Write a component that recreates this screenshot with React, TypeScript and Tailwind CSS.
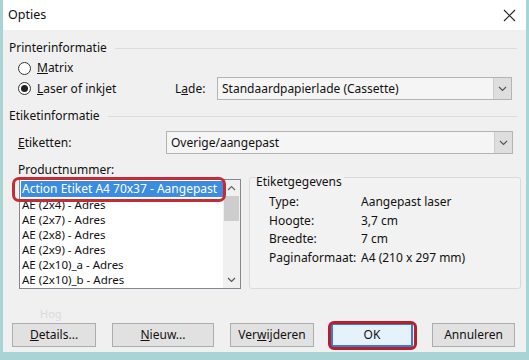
import { FC } from 'react';

const font = { fontFamily: '"Noto Sans", "Open Sans", sans-serif' };

const items = [
    'AE (2x4) - Adres',
    'AE (2x7) - Adres',
    'AE (2x8) - Adres',
    'AE (2x9) - Adres',
    'AE (2x10)_a - Adres',
    'AE (2x10)_b - Adres',
];

const Chevron: FC = () => (
    <svg width="9" height="6" viewBox="0 0 9 6" fill="none">
        <path d="M1 1l3.5 3.5L8 1" stroke="#555" strokeWidth="1.2" />
    </svg>
);

const Select: FC<{ value: string; className: string }> = ({ value, className }) => (
    <div className={`flex h-[23px] border border-[#b4b4b4] bg-[#f5f5f5] ${className}`}>
        <div className="flex-1 pl-[4px] leading-[21px] text-[12px] text-[#111]">{value}</div>
        <div className="flex w-[18px] items-center justify-center border-l border-[#cdcdcd] bg-[#dedede]">
            <Chevron />
        </div>
    </div>
);

const GroupHeader: FC<{ title: string }> = ({ title }) => (
    <div className="flex h-[16px] items-center gap-[8px] pl-[6px] pr-[9px]">
        <span className="text-[12px] text-[#111]">{title}</span>
        <div className="h-px flex-1 bg-[#dcdcdc]" />
    </div>
);

const Radio: FC<{ checked?: boolean }> = ({ checked }) => (
    <div className="flex h-[13px] w-[13px] items-center justify-center rounded-full border border-[#333] bg-white">
        {checked && <div className="h-[7px] w-[7px] rounded-full bg-[#222]" />}
    </div>
);

const Btn: FC<{ label: React.ReactNode; className: string; primary?: boolean }> = ({ label, className, primary }) => (
    <div
        className={`flex h-[24px] items-center justify-center text-[12px] text-[#111] ${primary ? 'border-2 border-[#3a7bd5] bg-[#e5f1fb]' : 'border border-[#adadad] bg-[#e1e1e1]'} ${className}`}
    >
        {label}
    </div>
);

export default function App() {
    return (
        <div className="relative h-[360px] w-[529px] overflow-hidden bg-[#a9d4d6]" style={font}>
            <div className="ml-[3px] mr-[3px] flex h-[352px] flex-col bg-[#f0f0f0]">
                {/* title bar */}
                <div className="flex h-[30px] items-center justify-between bg-white pl-[5px] pr-[10px]">
                    <span className="text-[12.5px] text-[#111]">Opties</span>
                    <svg width="13" height="13" viewBox="0 0 13 13">
                        <path d="M1 1l11 11M12 1L1 12" stroke="#222" strokeWidth="1.1" />
                    </svg>
                </div>

                <div className="mt-[10px]">
                    <GroupHeader title="Printerinformatie" />
                </div>

                <div className="mt-[4px] flex h-[16px] items-center gap-[6px] pl-[15px]">
                    <Radio />
                    <span className="text-[12px] text-[#111]">
                        <u>M</u>atrix
                    </span>
                </div>

                <div className="mt-[1px] flex h-[23px] items-center pl-[15px]">
                    <Radio checked />
                    <span className="ml-[6px] w-[138px] text-[12px] text-[#111]">
                        <u>L</u>aser of inkjet
                    </span>
                    <span className="w-[42px] text-[12px] text-[#111]">
                        L<u>a</u>de:
                    </span>
                    <Select value="Standaardpapierlade (Cassette)" className="w-[295px]" />
                </div>

                <div className="mt-[8px]">
                    <GroupHeader title="Etiketinformatie" />
                </div>

                <div className="mt-[7px] flex h-[23px] items-center pl-[15px]">
                    <span className="w-[148px] text-[12px] text-[#111]">
                        <u>E</u>tiketten:
                    </span>
                    <Select value="Overige/aangepast" className="w-[347px]" />
                </div>

                <div className="mt-[8px] pl-[15px] text-[12px] leading-[16px] text-[#111]">Productnummer:</div>

                <div className="mt-[1px] flex gap-[8px] pl-[16px]">
                    {/* listbox */}
                    <div className="relative flex h-[110px] w-[222px] border border-[#828790] bg-white">
                        <div className="flex-1 overflow-hidden pt-[1px] pl-[1px]">
                            <div className="h-[16px] overflow-hidden whitespace-nowrap bg-[#3b8de0] pl-[1px] text-[12px] leading-[16px] text-white">
                                Action Etiket A4 70x37 - Aangepast
                            </div>
                            {items.map((it) => (
                                <div key={it} className="h-[15px] pl-[1px] text-[11.5px] leading-[15px] text-[#111]">
                                    {it}
                                </div>
                            ))}
                        </div>
                        <div className="flex w-[17px] flex-col items-center bg-[#f0f0f0]">
                            <div className="flex h-[16px] items-center justify-center">
                                <svg width="9" height="6" viewBox="0 0 9 6" fill="none">
                                    <path d="M1 5l3.5-3.5L8 5" stroke="#666" strokeWidth="1.2" />
                                </svg>
                            </div>
                            <div className="h-[25px] w-[15px] bg-[#cdcdcd]" />
                            <div className="flex-1" />
                            <div className="flex h-[16px] items-center justify-center">
                                <Chevron />
                            </div>
                        </div>
                    </div>

                    {/* Etiketgegevens */}
                    <div className="mt-[-2px] h-[112px] w-[272px] rounded-[3px] border border-[#dadada] bg-[#f2f2f2] pl-[6px]">
                        <div className="mt-[-4px] w-fit bg-[#f2f2f2] pr-[2px] text-[12px] leading-[16px] text-[#111]">Etiketgegevens</div>
                        <div className="mt-[3px] pl-[13px] text-[12px] text-[#111]">
                            {[
                                ['Type:', 'Aangepast laser'],
                                ['Hoogte:', '3,7 cm'],
                                ['Breedte:', '7 cm'],
                                ['Paginaformaat:', 'A4 (210 x 297 mm)'],
                            ].map(([k, v]) => (
                                <div key={k} className="flex h-[18.5px] items-center">
                                    <span className="w-[92px]">{k}</span>
                                    <span>{v}</span>
                                </div>
                            ))}
                        </div>
                    </div>
                </div>

                <div className="mt-[19px] pl-[37px] text-[11px] leading-[12px] text-[#dadada]">Hog</div>

                <div className="mt-[3px] flex items-center pl-[9px]">
                    <Btn label={<><u>D</u>etails...</>} className="w-[84px]" />
                    <Btn label={<><u>N</u>ieuw...</>} className="ml-[16px] w-[102px]" />
                    <Btn label={<>Ver<u>w</u>ijderen</>} className="ml-[16px] w-[84px]" />
                    <Btn label="OK" primary className="ml-[17px] w-[82px]" />
                    <Btn label="Annuleren" className="ml-[19px] w-[83px]" />
                </div>
            </div>

            {/* red annotation outlines */}
            <div className="absolute left-[12px] top-[177px] h-[25px] w-[214px] rounded-[7px] border-[3px] border-[#c62a33]" />
            <div className="absolute left-[328px] top-[321px] h-[29px] w-[89px] rounded-[6px] border-[3px] border-[#b5202d]" />
        </div>
    );
}
